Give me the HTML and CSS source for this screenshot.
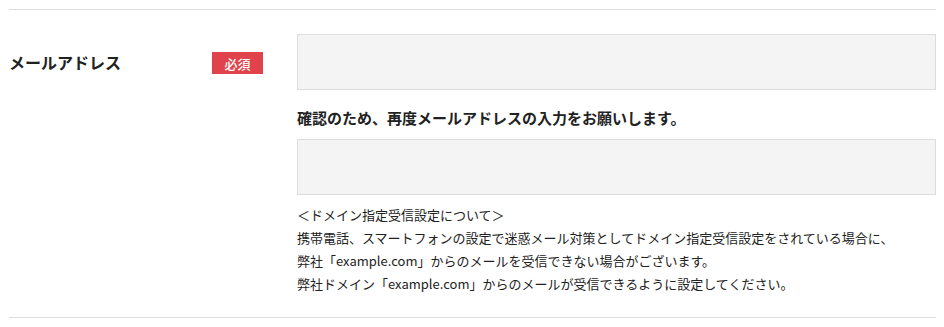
FILE: index.html
```html
<!DOCTYPE html>
<html lang="ja">
<head>
  <meta charset="UTF-8" />
  <meta name="viewport" content="width=device-width, initial-scale=1" />
  <title>お問い合わせ</title>
  <link rel="stylesheet" href="styles.css">
</head>
<body>

  <div class="form-wrap">
    <div class="form-row">
      <div class="form-label">
        <span class="label-text">メールアドレス</span>
        <span class="badge">必須</span>
      </div>
      <div class="form-field">
        <input class="text-input" type="email" name="email">
        <p class="confirm-text">確認のため、再度メールアドレスの入力をお願いします。</p>
        <input class="text-input" type="email" name="email_confirm">
        <p class="note">
          ＜ドメイン指定受信設定について＞<br>
          携帯電話、スマートフォンの設定で迷惑メール対策としてドメイン指定受信設定をされている場合に、<br>
          弊社「example.com」からのメールを受信できない場合がございます。<br>
          弊社ドメイン「example.com」からのメールが受信できるように設定してください。
        </p>
      </div>
    </div>
  </div>

</body>
</html>
```

FILE: styles.css
```css
body {
  margin: 0;
  font-family: "Noto Sans CJK JP", "Noto Sans", sans-serif;
  color: #222;
  background-color: #fff;
}
.form-wrap {
  padding: 9px 8px 0 9px;
}
.form-row {
  display: grid;
  grid-template-columns: 288px 1fr;
  border-top: 1px solid #ddd;
  border-bottom: 1px solid #ddd;
  padding: 24px 0 22px;
}
.form-label {
  height: 56px;
  display: flex;
  align-items: center;
  justify-content: space-between;
  padding-right: 34px;
}
.label-text {
  font-size: 16px;
  font-weight: bold;
}
.badge {
  width: 51px;
  height: 22px;
  display: flex;
  align-items: center;
  justify-content: center;
  background: #e0434b;
  color: white;
  font-size: 13px;
  font-weight: 500;
  margin-top: 2px;
}
.form-field {
  display: flex;
  flex-direction: column;
}
.text-input {
  box-sizing: border-box;
  height: 56px;
  width: 100%;
  margin: 0;
  background: #f4f4f4;
  border: 1px solid #ddd;
}
.confirm-text {
  margin: 17px 0 10px;
  font-size: 15px;
  font-weight: bold;
  line-height: 22px;
}
.note {
  margin: 8px 0 0;
  font-size: 13px;
  line-height: 23px;
}
```
